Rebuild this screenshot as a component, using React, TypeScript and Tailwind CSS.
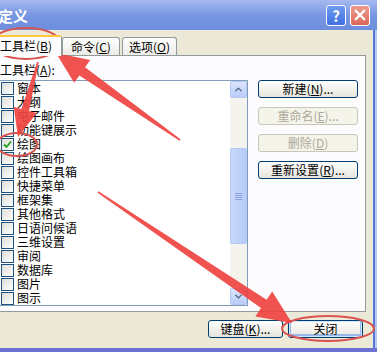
import { ChevronUp, ChevronDown } from "lucide-react";

const items = [
  "窗本",
  "大纲",
  "电子邮件",
  "功能键展示",
  "绘图",
  "绘图画布",
  "控件工具箱",
  "快捷菜单",
  "框架集",
  "其他格式",
  "日语问候语",
  "三维设置",
  "审阅",
  "数据库",
  "图片",
  "图示",
];

const Key = ({ k }: { k: string }) => (
  <>
    (<span className="underline">{k}</span>)
  </>
);

const XpButton = ({
  children,
  disabled,
  isDefault,
  className = "",
}: {
  children: React.ReactNode;
  disabled?: boolean;
  isDefault?: boolean;
  className?: string;
}) => (
  <div
    className={
      "flex items-center justify-center rounded-[3px] border leading-[14px] " +
      (disabled
        ? "border-[#c9c7ba] bg-[#f5f4ea] text-[#aca899] "
        : "border-[#003c74] bg-linear-to-b from-white to-[#e6e5dc] text-black ") +
      (isDefault ? "shadow-[inset_0_0_0_1px_#cee7ff,inset_0_-1px_0_2px_#98b8ea] " : "") +
      className
    }
  >
    {children}
  </div>
);

const Arrow = ({
  tip,
  tail,
  head = 32,
  half = 14,
  shaft = 5,
}: {
  tip: [number, number];
  tail: [number, number];
  head?: number;
  half?: number;
  shaft?: number;
}) => {
  const dx = tail[0] - tip[0];
  const dy = tail[1] - tip[1];
  const len = Math.hypot(dx, dy);
  const ux = dx / len;
  const uy = dy / len;
  const nx = -uy;
  const ny = ux;
  const bx = tip[0] + ux * head;
  const by = tip[1] + uy * head;
  const pts = [
    [tip[0], tip[1]],
    [bx + nx * half, by + ny * half],
    [bx + nx * shaft, by + ny * shaft],
    [tail[0] + nx * 0.8, tail[1] + ny * 0.8],
    [tail[0] - nx * 0.8, tail[1] - ny * 0.8],
    [bx - nx * shaft, by - ny * shaft],
    [bx - nx * half, by - ny * half],
  ];
  return <polygon points={pts.map((p) => p.join(",")).join(" ")} fill="#ef4440" fillOpacity={0.92} />;
};

export default function App() {
  return (
    <div className="relative flex h-[352px] w-[377px] flex-col overflow-hidden bg-[#ece9d8] font-['Noto_Sans_CJK_SC',sans-serif] text-[12px] text-black">
      {/* title bar */}
      <div className="flex h-[30px] items-center justify-between bg-linear-to-b from-[#a6baf0] via-[#7896e2] to-[#6d8ddd] pr-[7px]">
        <span className="-ml-[2px] text-[15px] font-bold leading-none text-white">定义</span>
        <div className="flex gap-[4px]">
          <div className="flex h-[21px] w-[20px] items-center justify-center rounded-[3px] border border-white bg-linear-to-b from-[#6f9bf0] to-[#3f6fe0] text-[15px] font-bold leading-none text-white">
            ?
          </div>
          <div className="flex h-[21px] w-[20px] items-center justify-center rounded-[3px] border border-white bg-linear-to-b from-[#ee9a8c] to-[#d8685a]">
            <svg width="12" height="12" viewBox="0 0 12 12">
              <path d="M2 2 L10 10 M10 2 L2 10" stroke="white" strokeWidth="2.4" strokeLinecap="square" />
            </svg>
          </div>
        </div>
      </div>

      <div className="flex flex-1">
        <div className="flex flex-1 flex-col pt-[7px]">
          {/* tabs */}
          <div className="relative z-10 -ml-[3px] flex h-[18px] items-end">
            <div className="-mb-px flex h-[21px] w-[65px] items-center rounded-t-[3px] border-x border-t-2 border-[#919b9c] border-t-[#ffc83c] bg-[#fcfcfe] pb-[2px] pl-[2px] leading-[14px]">
              工具栏<Key k="B" />
            </div>
            <div className="flex h-[18px] w-[58px] items-center justify-center rounded-t-[3px] border border-b-0 border-[#919b9c] bg-linear-to-b from-white to-[#ecebe6] leading-[14px]">
              命令<Key k="C" />
            </div>
            <div className="ml-[2px] flex h-[18px] w-[55px] items-center justify-center rounded-t-[3px] border border-b-0 border-[#919b9c] bg-linear-to-b from-white to-[#ecebe6] leading-[14px]">
              选项<Key k="O" />
            </div>
          </div>

          {/* panel */}
          <div className="-ml-[3px] flex h-[257px] w-[369px] flex-col border border-[#919b9c] bg-[#fcfcfe] pt-[7px]">
            <div className="mb-[3px] pl-[2px] leading-[14px]">
              工具栏<Key k="A" />:
            </div>
            <div className="flex">
              <div className="flex h-[226px] w-[250px] border border-[#7f9db9] bg-white">
                <div className="flex flex-1 flex-col pl-[2px]">
                  {items.map((name) => (
                    <div key={name} className="flex h-[14px] items-center gap-[3px] leading-[14px]">
                      <div className="flex h-[13px] w-[13px] items-center justify-center border border-[#1c5180] bg-linear-to-br from-[#dcdcd7] to-white">
                        {name === "绘图" && (
                          <svg width="9" height="9" viewBox="0 0 9 9">
                            <path d="M1 4.5 L3.5 7 L8 1.5" fill="none" stroke="#21a121" strokeWidth="1.8" />
                          </svg>
                        )}
                      </div>
                      <span>{name}</span>
                    </div>
                  ))}
                </div>
                {/* scrollbar */}
                <div className="flex w-[17px] flex-col bg-[#f4f3ee]">
                  <div className="flex h-[17px] items-center justify-center rounded-[2px] border border-[#b5c7f5] bg-linear-to-b from-[#dce6fc] to-[#b9cdf8]">
                    <ChevronUp size={11} strokeWidth={3} color="#4d6185" />
                  </div>
                  <div className="h-[50px]" />
                  <div className="flex h-[96px] flex-col items-center justify-center gap-[1px] rounded-[2px] border border-[#b5c7f5] bg-linear-to-r from-[#cad8fb] to-[#b6cbf8]">
                    <div className="h-px w-[7px] bg-[#8ea4e0]" />
                    <div className="h-px w-[7px] bg-[#8ea4e0]" />
                    <div className="h-px w-[7px] bg-[#8ea4e0]" />
                    <div className="h-px w-[7px] bg-[#8ea4e0]" />
                  </div>
                  <div className="flex-1" />
                  <div className="flex h-[17px] items-center justify-center rounded-[2px] border border-[#b5c7f5] bg-linear-to-b from-[#dce6fc] to-[#b9cdf8]">
                    <ChevronDown size={11} strokeWidth={3} color="#4d6185" />
                  </div>
                </div>
              </div>

              <div className="ml-[10px] flex flex-col gap-[9px]">
                <XpButton className="h-[18px] w-[100px]">
                  新建<Key k="N" />...
                </XpButton>
                <XpButton disabled className="h-[18px] w-[100px]">
                  重命名<Key k="E" />...
                </XpButton>
                <XpButton disabled className="h-[18px] w-[100px]">
                  删除<Key k="D" />
                </XpButton>
                <XpButton className="h-[18px] w-[100px]">
                  重新设置<Key k="R" />...
                </XpButton>
              </div>
            </div>
          </div>

          {/* bottom buttons */}
          <div className="flex flex-1 justify-end gap-[5px] pr-[10px] pt-[8px]">
            <XpButton className="h-[18px] w-[75px]">
              键盘<Key k="K" />...
            </XpButton>
            <XpButton isDefault className="h-[18px] w-[75px]">
              关闭
            </XpButton>
          </div>
        </div>
        <div className="flex w-[4px]">
          <div className="w-[2px] bg-[#5677d8]" />
          <div className="w-[2px] bg-[#b9c8f2]" />
        </div>
      </div>
      <div className="h-[4px] bg-[#6b72d4]" />

      {/* red annotations */}
      <svg className="pointer-events-none absolute left-0 top-0" width="377" height="352">
        <ellipse cx="26" cy="43.5" rx="35" ry="15.5" fill="none" stroke="#d9534f" strokeWidth="2" />
        <ellipse cx="17" cy="144.5" rx="20" ry="11.5" fill="none" stroke="#d9534f" strokeWidth="2" />
        <ellipse cx="328" cy="328.5" rx="46" ry="12.5" fill="none" stroke="#d9534f" strokeWidth="2" />
        <Arrow tip={[56, 53]} tail={[180, 140]} />
        <Arrow tip={[18, 137]} tail={[38, 62]} head={28} half={12} shaft={4} />
        <Arrow tip={[292, 323]} tail={[98, 192]} head={34} half={15} shaft={5} />
      </svg>
    </div>
  );
}
